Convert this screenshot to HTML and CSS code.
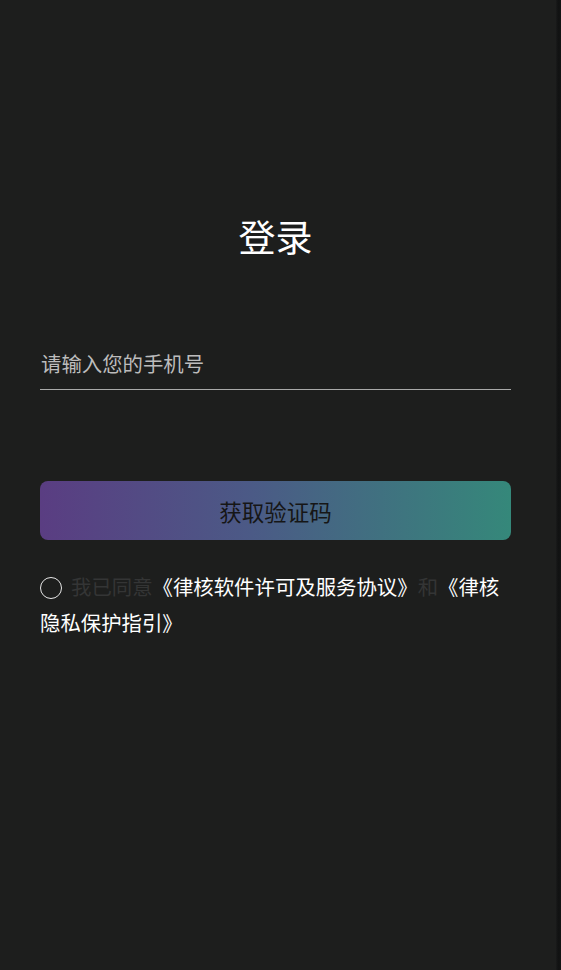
FILE: index.html
```html
<!DOCTYPE html>
<html lang="zh">
<head>
<meta charset="utf-8">
<link rel="stylesheet" href="styles.css">
</head>
<body>
<div class="screen">
  <main class="page">
    <h1 class="title">登录</h1>
    <div class="field">
      <span class="placeholder">请输入您的手机号</span>
    </div>
    <button class="submit">获取验证码</button>
    <p class="agree"><span class="radio"></span><span class="dim">我已同意</span>《律核软件许可及服务协议》<span class="dim">和</span>《律核隐私保护指引》</p>
  </main>
  <div class="edge"></div>
</div>
</body>
</html>
```
FILE: styles.css
```css
html, body {
  margin: 0;
  padding: 0;
  height: 100%;
  background: #1d1e1d;
}
body {
  font-family: "Noto Sans CJK SC", "Noto Sans", sans-serif;
  color: #ffffff;
}
.screen {
  display: flex;
  height: 970px;
}
.page {
  flex: 1;
  padding: 0 45px 0 40px;
  display: flex;
  flex-direction: column;
}
.edge {
  width: 7px;
  background: linear-gradient(to right, #1a1b1b, #111212 40%, #131414);
}
.title {
  margin: 210px 0 0;
  font-size: 37px;
  font-weight: 400;
  line-height: 52px;
  text-align: center;
  padding-left: 0;
}
.field {
  margin-top: 86px;
  height: 41px;
  border-bottom: 1px solid #a9aaa9;
  display: flex;
  align-items: flex-start;
}
.placeholder {
  font-size: 20.4px;
  line-height: 30px;
  color: #bcbcbc;
  padding-left: 1px;
}
.submit {
  margin-top: 91px;
  height: 59px;
  width: 471px;
  border: none;
  border-radius: 8px;
  background: linear-gradient(to right, #5a3d82, #4b5a86 45%, #35887a);
  color: #161616;
  font-family: inherit;
  font-size: 22.5px;
  padding: 0;
}
.agree {
  margin: 28px 0 0;
  padding-right: 8px;
  font-size: 20.4px;
  line-height: 36px;
  color: #ffffff;
}
.radio {
  display: inline-block;
  width: 20px;
  height: 20px;
  border: 1.5px solid #e6e6e6;
  border-radius: 50%;
  vertical-align: -4px;
  margin-right: 9px;
}
.dim {
  color: #343535;
}
```
